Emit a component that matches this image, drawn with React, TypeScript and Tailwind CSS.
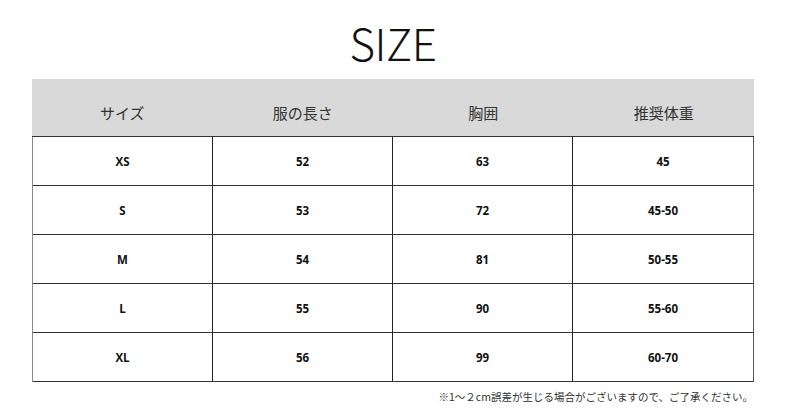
import React from "react";

const rows = [
  ["XS", "52", "63", "45"],
  ["S", "53", "72", "45-50"],
  ["M", "54", "81", "50-55"],
  ["L", "55", "90", "55-60"],
  ["XL", "56", "99", "60-70"],
];

const headers = ["サイズ", "服の長さ", "胸囲", "推奨体重"];

export default function App() {
  return (
    <div className="w-[786px] h-[411px] bg-white overflow-hidden" style={{ fontFamily: '"Noto Sans CJK JP", "Noto Sans", sans-serif' }}>
      <div className="h-[79px] flex items-center justify-center pt-[4px]">
        <h1 className="text-[44px] font-light leading-none text-[#111] tracking-[-0.5px]">SIZE</h1>
      </div>
      <div className="mx-[32px] w-[722px]">
        <div className="grid grid-cols-4 h-[58px] bg-[#d9d9d9] border-b border-[#333]">
          {headers.map((h) => (
            <div key={h} className="flex items-center justify-center pt-[12px] text-[15px] text-[#333]">
              {h}
            </div>
          ))}
        </div>
        <div className="border-l border-l-[#888] border-r border-r-[#555]">
          {rows.map((r, i) => (
            <div key={i} className="grid grid-cols-4 h-[49px] border-b border-[#333]">
              {r.map((c, j) => (
                <div
                  key={j}
                  className={`flex items-center justify-center pt-[1px] text-[11.5px] font-bold text-[#111] ${j < 3 ? "border-r border-[#222]" : ""}`}
                  style={{ fontFamily: '"Open Sans", sans-serif' }}
                >
                  {c}
                </div>
              ))}
            </div>
          ))}
        </div>
        <div className="flex justify-end pr-[1px] pt-[10px] text-[10.5px] text-[#333] leading-none">
          ※1～２cm誤差が生じる場合がございますので、ご了承ください。
        </div>
      </div>
    </div>
  );
}
